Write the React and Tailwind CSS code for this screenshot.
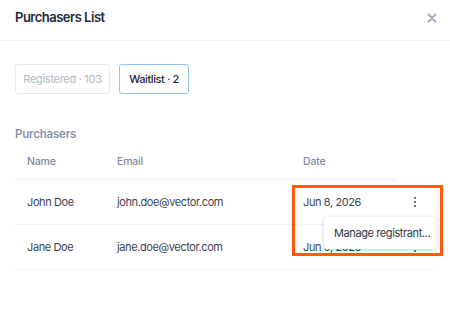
import React from 'react';

const rows = [
    { name: 'John Doe', email: 'john.doe@vector.com', date: 'Jun 8, 2026' },
    { name: 'Jane Doe', email: 'jane.doe@vector.com', date: 'Jun 9, 2026' },
];

function Kebab() {
    return (
        <svg width="4" height="12" viewBox="0 0 4 12" className="text-[#4b5563]">
            <circle cx="2" cy="2" r="1.1" fill="currentColor" />
            <circle cx="2" cy="6" r="1.1" fill="currentColor" />
            <circle cx="2" cy="10" r="1.1" fill="currentColor" />
        </svg>
    );
}

export default function App() {
    return (
        <div className="w-[450px] h-[317px] bg-white font-['Inter',sans-serif] text-[#374151] overflow-hidden">
            {/* Header */}
            <div className="h-[41px] px-[15px] pb-[4px] flex items-center justify-between border-b border-[#f0f1f4]">
                <h2 className="text-[13px] font-semibold text-[#222a3b] tracking-[-0.5px]">Purchasers List</h2>
                <svg width="10" height="10" viewBox="0 0 10 10" className="-mr-[2px]">
                    <path d="M1.5 1.5 L8.5 8.5 M8.5 1.5 L1.5 8.5" stroke="#a3abb8" strokeWidth="2" strokeLinecap="round" />
                </svg>
            </div>

            {/* Tabs */}
            <div className="px-[15px] pt-[23px] flex gap-[9px]">
                <button className="h-[30px] w-[95px] border border-[#e7e9ee] rounded-[3px] text-[11px] text-[#b3b9c6] tracking-[-0.3px]">
                    Registered · 103
                </button>
                <button className="h-[30px] w-[70px] border border-[#8cc4f5] rounded-[3px] text-[11px] font-medium text-[#222a3b] tracking-[-0.4px]">
                    Waitlist · 2
                </button>
            </div>

            {/* Purchasers */}
            <div className="px-[15px] pt-[32px]">
                <div className="text-[11.5px] font-semibold text-[#8a94a8] leading-[16px] tracking-[-0.2px]">Purchasers</div>

                <div className="relative mt-[3px]">
                    <div className="flex items-center h-[35px] w-[381px] border-b border-[#eef0f3] text-[10.5px] font-medium text-[#7f899c] tracking-[-0.2px]">
                        <div className="w-[102px] pl-[12px]">Name</div>
                        <div className="w-[186px]">Email</div>
                        <div>Date</div>
                    </div>
                    {rows.map((r) => (
                        <div key={r.name} className="flex items-center h-[45px] border-b border-[#eef0f3] text-[11px] text-[#3d4556] tracking-[-0.4px]">
                            <div className="w-[102px] pl-[12px]">{r.name}</div>
                            <div className="w-[186px]">{r.email}</div>
                            <div className="flex-1">{r.date}</div>
                            <div className="w-[24px] flex justify-center mr-[8px]"><Kebab /></div>
                        </div>
                    ))}

                    {/* Dropdown menu */}
                    <div className="absolute left-[309px] top-[72px] w-[113px] h-[32px] bg-white rounded-[4px] shadow-[0_1px_4px_rgba(0,0,0,0.2)] flex items-center pl-[10px] text-[11px] text-[#2f3747] tracking-[-0.4px] whitespace-nowrap">
                        Manage registrant...
                    </div>

                    {/* Highlight box */}
                    <div className="absolute left-[277px] top-[40px] w-[151px] h-[71px] border-[3px] border-[#ff5a0a]" />
                </div>
            </div>
        </div>
    );
}
